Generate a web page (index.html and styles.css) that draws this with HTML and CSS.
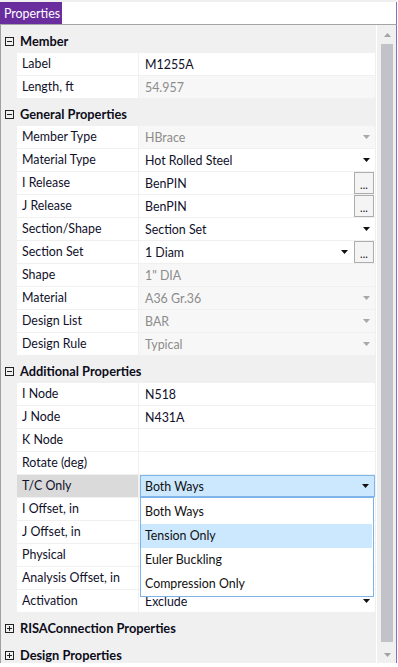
FILE: index.html
```html
<!DOCTYPE html>
<html lang="en">
<head>
    <meta charset="UTF-8">
    <meta name="viewport" content="width=device-width, initial-scale=1.0">
    <title>Properties</title>
    <link rel="stylesheet" href="styles.css">
</head>
<body>

    <div class="window">
        <div class="topstrip"></div>
        <div class="tabbar">
            <div class="tab">Properties</div>
        </div>

        <div class="panel">
            <div class="grid">

                <div class="header"><span class="box minus"></span>Member</div>
                <div class="row"><div class="label">Label</div><div class="value">M1255A</div></div>
                <div class="row"><div class="label">Length, ft</div><div class="value ro">54.957</div></div>

                <div class="header"><span class="box minus"></span>General Properties</div>
                <div class="row"><div class="label">Member Type</div><div class="value ro"><span class="text">HBrace</span><svg class="arrow grey" width="7" height="4"><polygon points="0,0 7,0 3.5,4"/></svg></div></div>
                <div class="row"><div class="label">Material Type</div><div class="value"><span class="text">Hot Rolled Steel</span><svg class="arrow" width="7" height="4"><polygon points="0,0 7,0 3.5,4"/></svg></div></div>
                <div class="row"><div class="label">I Release</div><div class="value has-btn"><span class="text">BenPIN</span><span class="dots">...</span></div></div>
                <div class="row"><div class="label">J Release</div><div class="value has-btn"><span class="text">BenPIN</span><span class="dots">...</span></div></div>
                <div class="row"><div class="label">Section/Shape</div><div class="value"><span class="text">Section Set</span><svg class="arrow" width="7" height="4"><polygon points="0,0 7,0 3.5,4"/></svg></div></div>
                <div class="row"><div class="label">Section Set</div><div class="value has-btn"><span class="text">1 Diam</span><svg class="arrow" width="7" height="4"><polygon points="0,0 7,0 3.5,4"/></svg><span class="dots">...</span></div></div>
                <div class="row"><div class="label">Shape</div><div class="value ro">1" DIA</div></div>
                <div class="row"><div class="label">Material</div><div class="value ro"><span class="text">A36 Gr.36</span><svg class="arrow grey" width="7" height="4"><polygon points="0,0 7,0 3.5,4"/></svg></div></div>
                <div class="row"><div class="label">Design List</div><div class="value ro"><span class="text">BAR</span><svg class="arrow grey" width="7" height="4"><polygon points="0,0 7,0 3.5,4"/></svg></div></div>
                <div class="row"><div class="label">Design Rule</div><div class="value ro"><span class="text">Typical</span><svg class="arrow grey" width="7" height="4"><polygon points="0,0 7,0 3.5,4"/></svg></div></div>

                <div class="header"><span class="box minus"></span>Additional Properties</div>
                <div class="row"><div class="label">I Node</div><div class="value">N518</div></div>
                <div class="row"><div class="label">J Node</div><div class="value">N431A</div></div>
                <div class="row"><div class="label">K Node</div><div class="value"></div></div>
                <div class="row"><div class="label">Rotate (deg)</div><div class="value"></div></div>
                <div class="row open">
                    <div class="label selected">T/C Only</div>
                    <div class="value combo"><span class="text">Both Ways</span><svg class="arrow" width="7" height="4"><polygon points="0,0 7,0 3.5,4"/></svg></div>
                    <div class="droplist">
                        <div class="item">Both Ways</div>
                        <div class="item hover">Tension Only</div>
                        <div class="item">Euler Buckling</div>
                        <div class="item">Compression Only</div>
                    </div>
                </div>
                <div class="row"><div class="label">I Offset, in</div><div class="value"></div></div>
                <div class="row"><div class="label">J Offset, in</div><div class="value"></div></div>
                <div class="row"><div class="label">Physical</div><div class="value"></div></div>
                <div class="row"><div class="label">Analysis Offset, in</div><div class="value"></div></div>
                <div class="row"><div class="label">Activation</div><div class="value"><span class="text">Exclude</span><svg class="arrow" width="7" height="4"><polygon points="0,0 7,0 3.5,4"/></svg></div></div>

                <div class="header"><span class="box plus"></span>RISAConnection Properties</div>
                <div class="header"><span class="box plus"></span>Design Properties</div>
            </div>

            <div class="scrollbar">
                <svg class="sarrow" width="7" height="4"><polygon points="3.5,0 7,4 0,4"/></svg>
                <div class="thumb"></div>
                <svg class="sarrow" width="7" height="4"><polygon points="0,0 7,0 3.5,4"/></svg>
            </div>
        </div>
    </div>

</body>
</html>
```

FILE: styles.css
```css
body {
    margin: 0;
    font-family: Lato, "Noto Sans", sans-serif;
    font-size: 12.4px;
    background-color: #fff;
    overflow: hidden;
}
.window {
    width: 397px;
    height: 667px;
}
.topstrip {
    height: 2px;
    background-color: #f0f0f0;
}
.tabbar {
    height: 22px;
    border-bottom: 1px solid #a5a5a5;
    border-right: 1px solid #8a70b4;
    background-color: #fff;
    display: flex;
}
.tab {
    background-color: #6a2d9e;
    color: #fff;
    padding: 0 4px 0 4px;
    line-height: 23px;
    font-size: 12.4px;
    width: 54px;
}
.panel {
    display: flex;
    height: 638px;
    border-left: 1px solid #a0a0a0;
    border-right: 1px solid #8a70b4;
    overflow: hidden;
}
.grid {
    width: 375px;
    background-color: #f0f0f0;
    padding-top: 1px;
    position: relative;
}
.header {
    height: 27px;
    box-sizing: border-box;
    padding-top: 3px;
    display: flex;
    align-items: center;
    font-weight: bold;
    color: #0c0c1a;
    font-size: 12.8px;
}
.box {
    width: 7px;
    height: 7px;
    border: 1px solid #222;
    margin: 0 6px 0 4px;
    position: relative;
}
.box::before {
    content: "";
    position: absolute;
    left: 1px;
    top: 3px;
    width: 5px;
    height: 1px;
    background-color: #222;
}
.box.plus::after {
    content: "";
    position: absolute;
    left: 3px;
    top: 1px;
    width: 1px;
    height: 5px;
    background-color: #222;
}
.row {
    display: flex;
    height: 22px;
    margin-bottom: 1px;
    margin-left: 16px;
    color: #10102a;
}
.label {
    width: 121px;
    background-color: #fff;
    padding-left: 5px;
    box-sizing: border-box;
    line-height: 22px;
    margin-right: 1px;
    white-space: nowrap;
}
.label.selected {
    background-color: #dadada;
}
.value {
    width: 236px;
    background-color: #fff;
    padding: 0 5px 0 6px;
    box-sizing: border-box;
    display: flex;
    align-items: center;
    white-space: nowrap;
}
.value.ro {
    background-color: #f7f7f7;
    color: #8c8c8c;
}
.value .text {
    flex: 1;
}
.arrow {
    fill: #111;
}
.arrow.grey {
    fill: #a8a8a8;
}
.value.has-btn {
    padding-right: 1px;
}
.dots {
    width: 18px;
    height: 20px;
    border: 1px solid #adadad;
    background-color: #f4f4f4;
    margin-left: 6px;
    text-align: center;
    line-height: 24px;
    font-size: 11px;
    color: #111;
}
.value.combo {
    background-color: #cce8ff;
    border: 1px solid #7eb4ea;
    margin-left: 1px;
    padding-left: 4px;
    width: 235px;
    color: #111;
}
.open {
    position: relative;
}
.droplist {
    position: absolute;
    left: 123px;
    top: 22px;
    width: 232px;
    background-color: #fff;
    border: 1px solid #7eb4ea;
    padding-top: 2px;
    z-index: 2;
}
.item {
    height: 24px;
    line-height: 24px;
    padding-left: 4px;
    margin-right: 1px;
    color: #111;
}
.item.hover {
    background-color: #cce8ff;
}
.scrollbar {
    width: 19px;
    border-left: 1px solid #fff;
    background-color: #f0f0f0;
    display: flex;
    flex-direction: column;
    align-items: center;
    fill: #a3a3a3;
}
.sarrow {
    margin-top: 8px;
    margin-left: 1px;
}
.thumb {
    width: 12px;
    height: 598px;
    background-color: #c2c3c9;
    margin: 7px 0 11px 1px;
}
.scrollbar .sarrow:last-child {
    margin-top: 0;
}
```
